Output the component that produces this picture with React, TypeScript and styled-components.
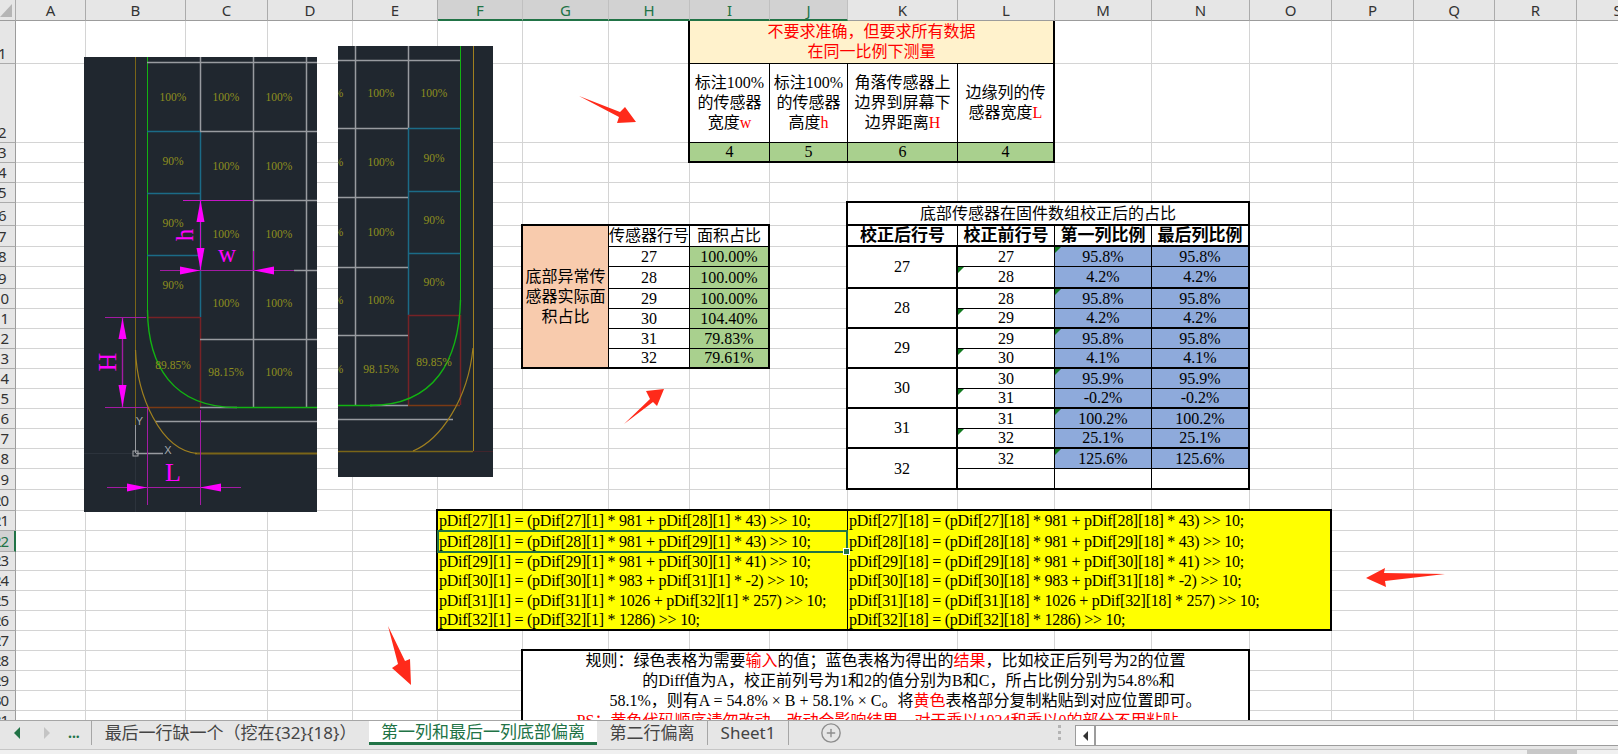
import styled, { createGlobalStyle } from "styled-components";
import { CirclePlus } from "lucide-react";

const GlobalStyle = createGlobalStyle`
	html, body {
		margin: 0;
		padding: 0;
		background: #fff;
	}
`;

const SERIF = `"Liberation Serif", "Noto Sans CJK SC", serif`;
const SANS = `"Noto Sans", "Noto Sans CJK SC", sans-serif`;
const GREEN = "#217346";

// x / y of the lines between columns and rows
const colEdges = [16, 86, 186, 268, 353, 438, 523, 609, 690, 770, 848, 958, 1055, 1152, 1250, 1332, 1414, 1495, 1577, 1659];
const rowEdges = [21, 64, 143, 163, 183, 203, 226, 247, 267, 289, 309, 329, 349, 369, 389, 409, 429, 449, 469, 490, 511, 531, 552, 571, 591, 611, 631, 651, 671, 691, 711, 731];
const colLabels = "ABCDEFGHIJKLMNOPQRS".split("");
const colWidths = colLabels.map((_, i) => colEdges[i + 1] - colEdges[i]);
const rowHeights = rowEdges.slice(1).map((y, i) => y - rowEdges[i]);
const selectedCols = "FGHIJ";

const Page = styled.div`
	position: relative;
	width: 1618px;
	height: 754px;
	overflow: hidden;
	display: flex;
	flex-direction: column;
	background: #fff;
`;

const ColumnBar = styled.div`
	display: flex;
	height: 21px;
	flex: none;
`;

const Corner = styled.div`
	width: 16px;
	flex: none;
	box-sizing: border-box;
	background: #e6e6e6;
	border-right: 1px solid #ababab;
	border-bottom: 1px solid #9c9c9c;
	svg {
		display: block;
	}
`;

const ColHead = styled.div<{ $w: number; $on: boolean }>`
	width: ${(p) => p.$w}px;
	flex: none;
	box-sizing: border-box;
	display: flex;
	align-items: center;
	justify-content: center;
	font: 15px ${SANS};
	color: ${(p) => (p.$on ? GREEN : "#333")};
	background: ${(p) => (p.$on ? "#d2d2d2" : "#e6e6e6")};
	border-right: 1px solid ${(p) => (p.$on ? "#c0c0c0" : "#ababab")};
	border-bottom: ${(p) => (p.$on ? `2px solid ${GREEN}` : "1px solid #9c9c9c")};
`;

const Body = styled.div`
	display: flex;
	height: 699px;
	flex: none;
	overflow: hidden;
`;

const RowBar = styled.div`
	width: 16px;
	flex: none;
	display: flex;
	flex-direction: column;
`;

const RowHead = styled.div<{ $h: number; $on: boolean }>`
	height: ${(p) => p.$h}px;
	flex: none;
	box-sizing: border-box;
	display: flex;
	align-items: flex-end;
	overflow: hidden;
	background: ${(p) => (p.$on ? "#d2d2d2" : "#e6e6e6")};
	border-bottom: 1px solid #ababab;
	border-right: ${(p) => (p.$on ? `2px solid ${GREEN}` : "1px solid #9c9c9c")};
	color: ${(p) => (p.$on ? GREEN : "#333")};
	font: 15px/19px ${SANS};
	letter-spacing: -1px;
`;

// the row bar is scrolled a little out of view, so wide numbers lose their first digit
const RowNumber = styled.span<{ $wide: boolean }>`
	flex: none;
	margin-left: ${(p) => (p.$wide ? -7 : -2)}px;
	white-space: nowrap;
`;

const Grid = styled.div`
	position: relative;
	flex: 1;
	display: grid;
	grid-template-columns: ${colWidths.map((w) => `${w}px`).join(" ")};
	grid-template-rows: ${rowHeights.map((h) => `${h}px`).join(" ")};
	grid-auto-rows: 20px;
	align-content: start;
	overflow: hidden;
`;

const GridCell = styled.div`
	box-sizing: border-box;
	border-right: 1px solid #d4d4d4;
	border-bottom: 1px solid #d4d4d4;
`;

const Block = styled.div<{ $col: number; $cols: number; $row: number; $rows: number; $noTop?: boolean }>`
	grid-column: ${(p) => p.$col} / span ${(p) => p.$cols};
	grid-row: ${(p) => p.$row} / span ${(p) => p.$rows};
	display: grid;
	grid-template-columns: subgrid;
	grid-template-rows: subgrid;
	margin: ${(p) => (p.$noTop ? 0 : -2)}px 0 0 -2px;
	border: 2px solid #000;
	border-top-width: ${(p) => (p.$noTop ? 0 : 2)}px;
	background: #fff;
	z-index: 1;
`;

const Cell = styled.div<{
	$cs?: number;
	$rs?: number;
	$bg?: string;
	$color?: string;
	$rb?: number;
	$bb?: number;
	$bold?: boolean;
	$code?: boolean;
	$tick?: boolean;
}>`
	position: relative;
	box-sizing: border-box;
	min-width: 0;
	min-height: 0;
	grid-column: span ${(p) => p.$cs || 1};
	grid-row: span ${(p) => p.$rs || 1};
	display: flex;
	align-items: center;
	justify-content: ${(p) => (p.$code ? "flex-start" : "center")};
	text-align: center;
	white-space: ${(p) => (p.$code ? "nowrap" : "normal")};
	padding-left: ${(p) => (p.$code ? 1 : 0)}px;
	letter-spacing: ${(p) => (p.$code ? -0.26 : 0)}px;
	font: ${(p) => (p.$bold ? "bold 17px/20px" : "16px/20px")} ${SERIF};
	color: ${(p) => p.$color || "#000"};
	background: ${(p) => p.$bg || "#fff"};
	border-right: ${(p) => p.$rb ?? 0}px solid #000;
	border-bottom: ${(p) => p.$bb ?? 0}px solid #000;
	${(p) =>
		p.$tick
			? `&::before {
		content: "";
		position: absolute;
		left: 0;
		top: 0;
		border-top: 6px solid #117a1e;
		border-right: 6px solid transparent;
	}`
			: ""}
`;

const Red = styled.span`
	color: #ff0000;
`;

const Selection = styled.div`
	grid-column: 6 / span 5;
	grid-row: 22;
	position: relative;
	margin: -1px 0 -1px -1px;
	border: 2px solid ${GREEN};
	z-index: 2;
	&::after {
		content: "";
		position: absolute;
		right: -4px;
		bottom: -4px;
		width: 5px;
		height: 5px;
		background: ${GREEN};
		border: 1px solid #fff;
	}
`;

const RuleBox = styled(Block)`
	display: block;
`;

const RuleLine = styled.div<{ $indent?: number; $color?: string }>`
	height: 20px;
	padding-left: ${(p) => p.$indent || 0}px;
	text-align: center;
	white-space: nowrap;
	font: 16px/20px ${SERIF};
	color: ${(p) => p.$color || "#000"};
`;

const Picture = styled.svg<{ $x: number; $y: number }>`
	position: absolute;
	left: ${(p) => p.$x}px;
	top: ${(p) => p.$y}px;
	background: #20272f;
	z-index: 3;
`;

const CadLabel = styled.text`
	font: 11.5px "Liberation Serif", serif;
	fill: #8f8f1e;
	text-anchor: middle;
	dominant-baseline: central;
`;

const DimLabel = styled.text<{ $size: number }>`
	font: ${(p) => p.$size}px "Liberation Serif", serif;
	fill: #ff00ff;
	text-anchor: middle;
`;

const AxisLabel = styled.text`
	font: 11px "Liberation Sans", sans-serif;
	fill: #a4a7ab;
	text-anchor: middle;
`;

const ArrowLayer = styled.svg`
	position: absolute;
	left: 0;
	top: 0;
	z-index: 5;
`;

const TabBar = styled.div`
	position: relative;
	height: 29px;
	flex: none;
	box-sizing: border-box;
	display: flex;
	align-items: flex-start;
	background: #e6e6e6;
	border-top: 1px solid #a6a6a6;
	z-index: 6;
`;

const NavGroup = styled.div`
	width: 91px;
	height: 24px;
	flex: none;
	display: flex;
	align-items: center;
`;

const NavArrow = styled.span<{ $right?: boolean; $gap: number }>`
	margin-left: ${(p) => p.$gap}px;
	width: 0;
	height: 0;
	border-top: 6px solid transparent;
	border-bottom: 6px solid transparent;
	${(p) => (p.$right ? "border-left: 6px solid #c4c4c4;" : `border-right: 6px solid ${GREEN};`)}
`;

const NavMore = styled.span`
	margin-left: 18px;
	font: bold 14px/14px ${SANS};
	color: ${GREEN};
`;

const Tab = styled.div<{ $w: number; $active?: boolean; $afterActive?: boolean }>`
	width: ${(p) => p.$w}px;
	height: 24px;
	flex: none;
	box-sizing: border-box;
	display: flex;
	align-items: center;
	justify-content: center;
	white-space: nowrap;
	font: 17px/22px ${SANS};
	color: ${(p) => (p.$active ? GREEN : "#444")};
	background: ${(p) => (p.$active ? "#fff" : "transparent")};
	border-left: ${(p) => (p.$active || p.$afterActive ? "none" : "1px solid #a6a6a6")};
	border-bottom: ${(p) => (p.$active ? `3px solid ${GREEN}` : "none")};
`;

const AddSlot = styled.div`
	width: 270px;
	height: 24px;
	flex: none;
	box-sizing: border-box;
	padding-left: 31px;
	display: flex;
	align-items: center;
	border-left: 1px solid #a6a6a6;
	color: #8d8d8d;
`;

const Dots = styled.div`
	width: 3px;
	height: 18px;
	margin-top: 4px;
	flex: none;
	background: repeating-linear-gradient(#b4b4b4 0 3px, transparent 3px 6px);
`;

const ScrollBox = styled.div`
	margin: 4px 0 0 14px;
	height: 19px;
	flex: 1;
	display: flex;
	background: #fff;
	border: 1px solid #9c9c9c;
	border-right: none;
`;

const ScrollButton = styled.div`
	width: 18px;
	flex: none;
	display: flex;
	align-items: center;
	justify-content: center;
	border-right: 2px solid #9c9c9c;
	&::before {
		content: "";
		border-top: 5px solid transparent;
		border-bottom: 5px solid transparent;
		border-right: 5px solid #333;
	}
`;

const StatusStrip = styled.div`
	height: 5px;
	flex: none;
	display: flex;
	justify-content: flex-end;
	background: #f0f0f0;
	border-top: 1px solid #c6c6c6;
	box-sizing: border-box;
`;

const StripThumb = styled.div`
	width: 50px;
	margin-right: 41px;
	background: #c8c8c8;
`;

type Seg = [number, number, number, number, string, number?];

const GREY = "#989ba0";
const BLUE = "#1b6b87";
const WINE = "#762226";
const LIME = "#12b312";
const OLIVE = "#7a6518";
const GOLD = "#a0801f";
const PINK = "#a31ba3";

const leftLines: Seg[] = [
	[135.5, 57, 135.5, 425, OLIVE],
	[135.5, 425, 135.5, 453, GREY],
	[147.5, 57, 147.5, 312, LIME],
	[200.5, 57, 200.5, 131, GREY, 1.5],
	[200.5, 131, 200.5, 317, BLUE, 1.5],
	[200.5, 317, 200.5, 407, WINE, 1.5],
	[253.5, 57, 253.5, 407, GREY, 1.5],
	[306.5, 57, 306.5, 407, GREY, 1.5],
	[147, 62.5, 317, 62.5, GREY, 1.5],
	[147, 131.5, 200, 131.5, BLUE, 1.5],
	[200, 131.5, 317, 131.5, GREY, 1.5],
	[147, 193.5, 200, 193.5, BLUE, 1.5],
	[147, 255.5, 198, 255.5, BLUE, 1.5],
	[253, 200.5, 317, 200.5, GREY, 1.5],
	[294, 270.5, 317, 270.5, GREY, 1.5],
	[147, 317.5, 200, 317.5, WINE, 1.5],
	[200, 339.5, 317, 339.5, GREY, 1.5],
	[147, 407.5, 200, 407.5, "#7a3a14", 1.5],
	[200, 407.5, 237, 407.5, GREY, 1.5],
	[237, 407.5, 317, 407.5, LIME, 1.5],
	[155, 421.5, 317, 421.5, GREY, 1.5],
	[135, 453.5, 163, 453.5, GREY, 1.5],
	[195, 453.5, 317, 453.5, OLIVE, 2],
	[84, 453.5, 135, 453.5, "#2c333c"],
	[135.5, 453, 135.5, 512, "#2c333c"],
	[105, 317.5, 146, 317.5, PINK],
	[105, 407.5, 147, 407.5, PINK],
	[122.5, 317, 122.5, 407, PINK, 1.4],
	[147.5, 407, 147.5, 505, PINK],
	[200.5, 410, 200.5, 505, PINK],
	[107, 487.5, 241, 487.5, PINK],
	[183, 200.5, 253, 200.5, "#c516c5"],
	[200.5, 200, 200.5, 270, "#c516c5"],
	[160, 270.5, 294, 270.5, PINK],
	[253.5, 251, 253.5, 270, "#c516c5"],
];

const rightLines: Seg[] = [
	[355.5, 46, 355.5, 405, GREY, 1.5],
	[408.5, 46, 408.5, 128, GREY, 1.5],
	[408.5, 128, 408.5, 315, BLUE, 1.5],
	[408.5, 315, 408.5, 405, WINE, 1.5],
	[460.5, 46, 460.5, 305, LIME],
	[460.5, 315, 460.5, 405, WINE, 1.5],
	[473.5, 46, 473.5, 451, GOLD],
	[338, 60.5, 460, 60.5, GREY, 1.5],
	[338, 128.5, 408, 128.5, GREY, 1.5],
	[408, 128.5, 460, 128.5, BLUE, 1.5],
	[338, 197.5, 408, 197.5, GREY, 1.5],
	[408, 191.5, 460, 191.5, BLUE, 1.5],
	[408, 253.5, 460, 253.5, BLUE, 1.5],
	[338, 267.5, 408, 267.5, GREY, 1.5],
	[338, 335.5, 408, 335.5, GREY, 1.5],
	[408, 315.5, 460, 315.5, WINE, 1.5],
	[408, 405.5, 460, 405.5, "#7a3a14", 1.5],
	[370, 405.5, 408, 405.5, GREY, 1.5],
	[338, 405.5, 372, 405.5, LIME, 1.5],
	[338, 419.5, 453, 419.5, GREY, 1.5],
	[338, 451.5, 473, 451.5, OLIVE, 1.5],
	[473, 451.5, 493, 451.5, "#40242c"],
];

const leftLabels: [string, number, number][] = [
	["100%", 173, 97],
	["90%", 173, 161],
	["90%", 173, 223],
	["90%", 173, 285],
	["89.85%", 173, 365],
	["100%", 226, 97],
	["100%", 226, 166],
	["100%", 226, 234],
	["100%", 226, 303],
	["98.15%", 226, 372],
	["100%", 279, 97],
	["100%", 279, 166],
	["100%", 279, 234],
	["100%", 279, 303],
	["100%", 279, 372],
];

const rightLabels: [string, number, number][] = [
	["100%", 330, 93],
	["100%", 330, 162],
	["100%", 330, 232],
	["100%", 330, 300],
	["100%", 330, 369],
	["100%", 381, 93],
	["100%", 381, 162],
	["100%", 381, 232],
	["100%", 381, 300],
	["98.15%", 381, 369],
	["100%", 434, 93],
	["90%", 434, 158],
	["90%", 434, 220],
	["90%", 434, 282],
	["89.85%", 434, 362],
];

const Segments = ({ items }: { items: Seg[] }) => (
	<>
		{items.map(([x1, y1, x2, y2, color, w], i) => (
			<line key={i} x1={x1} y1={y1} x2={x2} y2={y2} stroke={color} strokeWidth={w || 1} />
		))}
	</>
);

const Labels = ({ items }: { items: [string, number, number][] }) => (
	<>
		{items.map(([t, x, y], i) => (
			<CadLabel key={i} x={x} y={y}>
				{t}
			</CadLabel>
		))}
	</>
);

const LeftDrawing = () => (
	<Picture $x={68} $y={36} width={233} height={455} viewBox="84 57 233 455">
		<Segments items={leftLines} />
		<path d="M147.5 310 C148 365 172 407.5 237 407.5" fill="none" stroke={LIME} strokeWidth={1.4} />
		<path d="M135.5 350 C137 395 160 450 197 453.5" fill="none" stroke={GOLD} strokeWidth={1.2} />
		<Labels items={leftLabels} />
		<rect x={133} y={451} width={5} height={5} fill="none" stroke="#a4a7ab" />
		<AxisLabel x={139.5} y={425}>
			Y
		</AxisLabel>
		<AxisLabel x={168} y={454}>
			X
		</AxisLabel>
		{/* dimension arrows */}
		<g fill="#ff00ff">
			<polygon points="122.5,318 118.5,339 126.5,339" />
			<polygon points="122.5,407 118.5,385 126.5,385" />
			<polygon points="147,487.5 127,483.5 127,491.5" />
			<polygon points="200,487.5 221,483.5 221,491.5" />
			<polygon points="200.5,200 196.5,222 204.5,222" />
			<polygon points="200.5,270 196.5,248 204.5,248" />
			<polygon points="200,270.5 180,266.5 180,274.5" />
			<polygon points="254,270.5 274,266.5 274,274.5" />
		</g>
		<DimLabel $size={26} x={173} y={481}>
			L
		</DimLabel>
		<DimLabel $size={26} x={0} y={0} transform="translate(116 362) rotate(-90)">
			H
		</DimLabel>
		<DimLabel $size={25} x={0} y={0} transform="translate(193 235) rotate(-90)">
			h
		</DimLabel>
		<DimLabel $size={25} x={227} y={262}>
			w
		</DimLabel>
	</Picture>
);

const RightDrawing = () => (
	<Picture $x={322} $y={25} width={155} height={431} viewBox="338 46 155 431">
		<Segments items={rightLines} />
		<path d="M460.5 300 C459 360 435 405.5 370 405.5" fill="none" stroke={LIME} strokeWidth={1.4} />
		<path d="M473 348 C468 400 440 440 413 451" fill="none" stroke={GOLD} strokeWidth={1.2} />
		<Labels items={rightLabels} />
	</Picture>
);

const Arrows = () => (
	<ArrowLayer width={1618} height={720} viewBox="0 0 1618 720">
		<g fill="#ff2a1a">
			<polygon points="579,96 620,112 625,107 636,122 617,123 619,117" />
			<polygon points="624,424 650,399 646,391 664,389 657,406 653,402" />
			<polygon points="1366,578 1385,568 1384,573 1445,574 1385,581 1386,587" />
			<polygon points="388,626 405,661 410,659 411,685 392,668 398,664" />
		</g>
	</ArrowLayer>
);

const SizeNote = () => (
	<Block $col={9} $cols={4} $row={1} $rows={3} $noTop>
		<Cell $cs={4} $bg="#fff2cc" $color="#ff0000" $bb={1}>
			不要求准确，但要求所有数据
			<br />
			在同一比例下测量
		</Cell>
		<Cell $rb={1} $bb={1}>
			<span>
				标注100%的传感器宽度<Red>w</Red>
			</span>
		</Cell>
		<Cell $rb={1} $bb={1}>
			<span>
				标注100%的传感器高度<Red>h</Red>
			</span>
		</Cell>
		<Cell $rb={1} $bb={1}>
			<span>
				角落传感器上边界到屏幕下边界距离<Red>H</Red>
			</span>
		</Cell>
		<Cell $bb={1}>
			<span>
				边缘列的传感器宽度<Red>L</Red>
			</span>
		</Cell>
		<Cell $bg="#a9d08e" $rb={1}>4</Cell>
		<Cell $bg="#a9d08e" $rb={1}>5</Cell>
		<Cell $bg="#a9d08e" $rb={1}>6</Cell>
		<Cell $bg="#a9d08e">4</Cell>
	</Block>
);

const areaRows = [
	["27", "100.00%"],
	["28", "100.00%"],
	["29", "100.00%"],
	["30", "104.40%"],
	["31", "79.83%"],
	["32", "79.61%"],
];

const AreaRow = ({ row, area, last }: { row: string; area: string; last: boolean }) => (
	<>
		<Cell $rb={1} $bb={last ? 0 : 1}>{row}</Cell>
		<Cell $bg="#a9d08e" $bb={last ? 0 : 1}>{area}</Cell>
	</>
);

const AreaTable = () => (
	<Block $col={7} $cols={3} $row={7} $rows={7}>
		<Cell $rs={7} $bg="#f8cbad" $rb={1}>
			底部异常传感器实际面积占比
		</Cell>
		<Cell $rb={1} $bb={1}>传感器行号</Cell>
		<Cell $bb={1}>面积占比</Cell>
		{areaRows.map(([row, area], i) => (
			<AreaRow key={row} row={row} area={area} last={i === areaRows.length - 1} />
		))}
	</Block>
);

const ratioGroups = [
	{ row: "27", before: ["27", "28"], ratio: ["95.8%", "4.2%"] },
	{ row: "28", before: ["28", "29"], ratio: ["95.8%", "4.2%"] },
	{ row: "29", before: ["29", "30"], ratio: ["95.8%", "4.1%"] },
	{ row: "30", before: ["30", "31"], ratio: ["95.9%", "-0.2%"] },
	{ row: "31", before: ["31", "32"], ratio: ["100.2%", "25.1%"] },
	{ row: "32", before: ["32", ""], ratio: ["125.6%", ""] },
];

const BLUE_FILL = "#8eaadb";

const RatioGroup = ({ row, before, ratio, last }: { row: string; before: string[]; ratio: string[]; last: boolean }) => {
	const end = last ? 0 : 2;
	return (
		<>
			<Cell $rs={2} $rb={2} $bb={end}>{row}</Cell>
			<Cell $rb={1} $bb={1}>{before[0]}</Cell>
			<Cell $bg={BLUE_FILL} $rb={1} $bb={1} $tick>{ratio[0]}</Cell>
			<Cell $bg={BLUE_FILL} $bb={1}>{ratio[0]}</Cell>
			<Cell $rb={1} $bb={end} $tick={!!before[1]}>{before[1]}</Cell>
			<Cell $bg={ratio[1] ? BLUE_FILL : "#fff"} $rb={1} $bb={end}>{ratio[1]}</Cell>
			<Cell $bg={ratio[1] ? BLUE_FILL : "#fff"} $bb={end}>{ratio[1]}</Cell>
		</>
	);
};

const RatioTable = () => (
	<Block $col={11} $cols={4} $row={6} $rows={14}>
		<Cell $cs={4} $bb={2}>底部传感器在固件数组校正后的占比</Cell>
		<Cell $bold $rb={1} $bb={2}>校正后行号</Cell>
		<Cell $bold $rb={1} $bb={2}>校正前行号</Cell>
		<Cell $bold $rb={1} $bb={2}>第一列比例</Cell>
		<Cell $bold $bb={2}>最后列比例</Cell>
		{ratioGroups.map((g, i) => (
			<RatioGroup key={g.row} {...g} last={i === ratioGroups.length - 1} />
		))}
	</Block>
);

const firstCode = [
	"pDif[27][1] = (pDif[27][1] * 981 + pDif[28][1] * 43) >> 10;",
	"pDif[28][1] = (pDif[28][1] * 981 + pDif[29][1] * 43) >> 10;",
	"pDif[29][1] = (pDif[29][1] * 981 + pDif[30][1] * 41) >> 10;",
	"pDif[30][1] = (pDif[30][1] * 983 + pDif[31][1] * -2) >> 10;",
	"pDif[31][1] = (pDif[31][1] * 1026 + pDif[32][1] * 257) >> 10;",
	"pDif[32][1] = (pDif[32][1] * 1286) >> 10;",
];

const CodeRow = ({ line }: { line: string }) => (
	<>
		<Cell $cs={5} $code $bg="#ffff00" $rb={1}>{line}</Cell>
		<Cell $cs={5} $code $bg="#ffff00">{line.replace(/\[1\]/g, "[18]")}</Cell>
	</>
);

const CodeTable = () => (
	<Block $col={6} $cols={10} $row={21} $rows={6}>
		{firstCode.map((line) => (
			<CodeRow key={line} line={line} />
		))}
	</Block>
);

const Rules = () => (
	<RuleBox $col={7} $cols={8} $row={28} $rows={4}>
		<RuleLine>
			规则：绿色表格为需要<Red>输入</Red>的值；蓝色表格为得出的<Red>结果</Red>，比如校正后列号为2的位置
		</RuleLine>
		<RuleLine $indent={46}>的Diff值为A，校正前列号为1和2的值分别为B和C，所占比例分别为54.8%和</RuleLine>
		<RuleLine $indent={40}>
			58.1%，则有A = 54.8% × B + 58.1% × C。将<Red>黄色</Red>表格部分复制粘贴到对应位置即可。
		</RuleLine>
		<RuleLine $color="#ff0000">PS：黄色代码顺序请勿改动，改动会影响结果，对于乘以1024和乘以0的部分不用粘贴。</RuleLine>
	</RuleBox>
);

function App() {
	const cells = Array.from({ length: 19 * 32 });

	return (
		<Page>
			<GlobalStyle />
			<ColumnBar>
				<Corner>
					<svg width="15" height="20" viewBox="0 0 15 20">
						<polygon points="0,17 12,4 12,17" fill="#b5b5b5" />
					</svg>
				</Corner>
				{colLabels.map((c, i) => (
					<ColHead key={c} $w={colWidths[i]} $on={selectedCols.includes(c)}>
						{c}
					</ColHead>
				))}
			</ColumnBar>
			<Body>
				<RowBar>
					{rowHeights.map((h, i) => (
						<RowHead key={i} $h={h} $on={i === 21}>
							<RowNumber $wide={i >= 9}>{i + 1}</RowNumber>
						</RowHead>
					))}
				</RowBar>
				<Grid>
					<SizeNote />
					<AreaTable />
					<RatioTable />
					<CodeTable />
					<Selection />
					<Rules />
					{cells.map((_, i) => (
						<GridCell key={i} />
					))}
					<LeftDrawing />
					<RightDrawing />
				</Grid>
			</Body>
			<TabBar>
				<NavGroup>
					<NavArrow $gap={14} />
					<NavArrow $gap={24} $right />
					<NavMore>...</NavMore>
				</NavGroup>
				<Tab $w={278}>最后一行缺一个（挖在{"{32}{18}"}）</Tab>
				<Tab $w={228} $active>第一列和最后一列底部偏离</Tab>
				<Tab $w={110} $afterActive>第二行偏离</Tab>
				<Tab $w={81}>Sheet1</Tab>
				<AddSlot>
					<CirclePlus size={22} strokeWidth={1.5} />
				</AddSlot>
				<Dots />
				<ScrollBox>
					<ScrollButton />
				</ScrollBox>
			</TabBar>
			<StatusStrip>
				<StripThumb />
			</StatusStrip>
			<Arrows />
		</Page>
	);
}

export default App;
